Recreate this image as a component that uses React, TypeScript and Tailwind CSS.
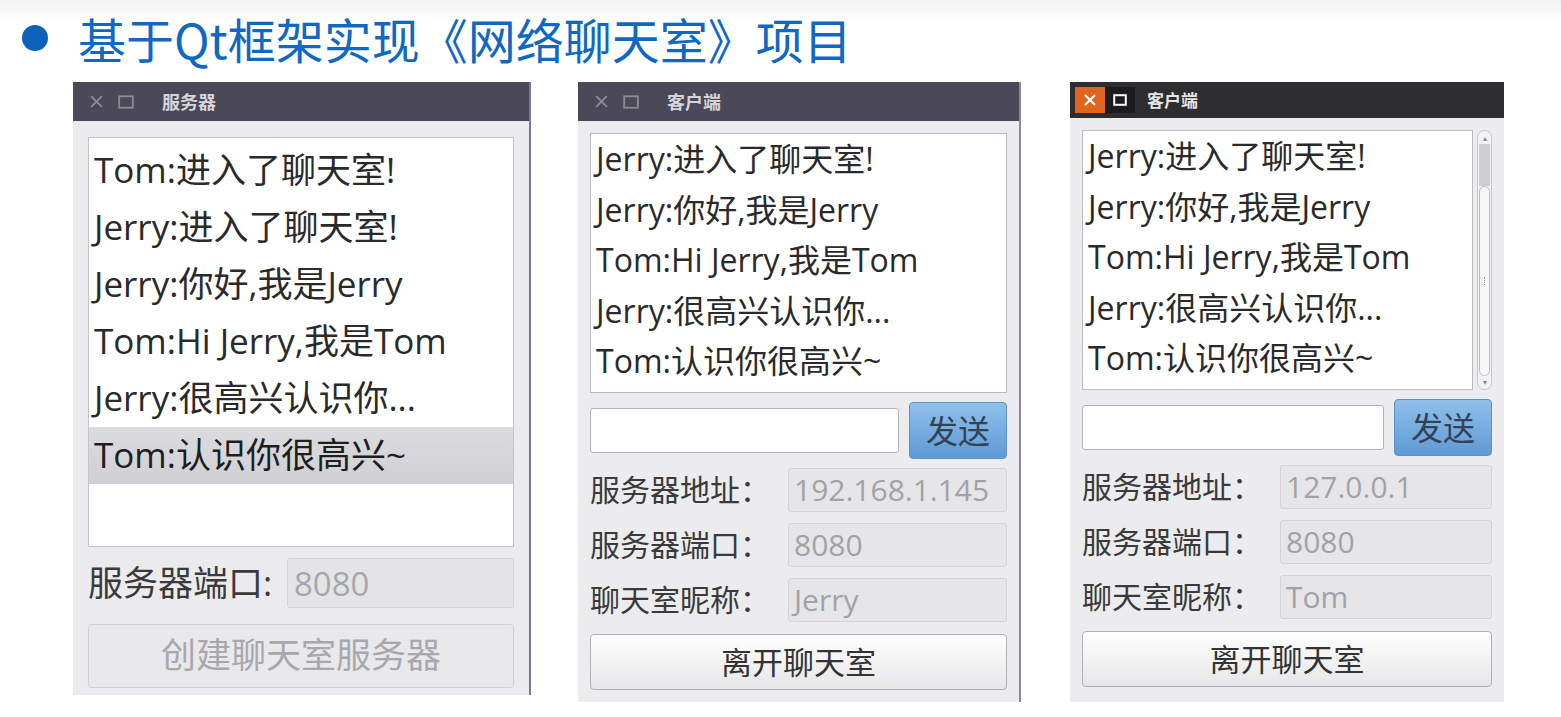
import React from 'react';

const cjk = '"Open Sans", "Noto Sans CJK SC", sans-serif';
const titleFont = '"Noto Sans CJK SC", sans-serif';

function TitleBar({ title, dark }: { title: string; dark?: boolean }) {
  if (dark) {
    return (
      <div className="flex h-[36px] items-center bg-[#2e2d30] pl-[5px]">
        <div className="flex h-[26px] w-[30px] items-center justify-center bg-[#e2631e]">
          <svg width="14" height="14" viewBox="0 0 14 14">
            <path d="M2 2 L12 12 M12 2 L2 12" stroke="#fff" strokeWidth="2.2" />
          </svg>
        </div>
        <div className="flex h-[26px] w-[30px] items-center justify-center bg-[#1c1c1e]">
          <svg width="14" height="12" viewBox="0 0 14 12">
            <rect x="1.2" y="1.2" width="11.6" height="9.6" fill="none" stroke="#fff" strokeWidth="2" />
          </svg>
        </div>
        <span className="ml-[12px] text-[17px] font-bold text-[#e4e4e6]" style={{ fontFamily: titleFont }}>
          {title}
        </span>
      </div>
    );
  }
  return (
    <div className="flex h-[39px] items-center gap-[14px] bg-[#4b4957] pl-[16px]">
      <svg width="15" height="15" viewBox="0 0 14 14">
        <path d="M2 2 L12 12 M12 2 L2 12" stroke="#8c8a96" strokeWidth="1.8" />
      </svg>
      <svg width="16" height="14" viewBox="0 0 14 12">
        <rect x="1" y="1" width="12" height="10" fill="none" stroke="#8c8a96" strokeWidth="1.6" />
      </svg>
      <span className="ml-[14px] text-[18px] font-bold text-[#d6d5dc]" style={{ fontFamily: titleFont }}>
        {title}
      </span>
    </div>
  );
}

function ReadOnlyField({ label, value }: { label: string; value: string }) {
  return (
    <div className="flex items-center">
      <span className="w-[198px] text-[30px] text-[#3a3a3a]" style={{ fontFamily: cjk }}>
        {label}
      </span>
      <div
        className="flex h-[44px] flex-1 items-center rounded-[3px] border border-[#d4d4d8] bg-[#e6e6e9] pl-[5px] text-[30px] text-[#a2a2a6]"
        style={{ fontFamily: cjk }}
      >
        {value}
      </div>
    </div>
  );
}

function Server() {
  const rows = ['Tom:进入了聊天室!', 'Jerry:进入了聊天室!', 'Jerry:你好,我是Jerry', 'Tom:Hi Jerry,我是Tom', 'Jerry:很高兴认识你...'];
  return (
    <div className="ml-[73px] flex h-[613px] w-[458px] flex-col border-r-2 border-[#7d72a8] bg-[#ebebee]">
      <TitleBar title="服务器" />
      <div className="flex flex-1 flex-col px-[15px] pt-[16px]">
        <div className="h-[410px] border border-[#c4c4c8] bg-white pt-[4px]" style={{ fontFamily: cjk }}>
          {rows.map((r) => (
            <div key={r} className="flex h-[57px] items-center pl-[5px] text-[35px] text-[#2a2a2a]">
              {r}
            </div>
          ))}
          <div className="flex h-[57px] items-center bg-gradient-to-b from-[#dcdce0] to-[#cfcfd4] pl-[5px] text-[35px] text-[#1e1e1e]">
            Tom:认识你很高兴~
          </div>
        </div>
        <div className="mt-[10px] flex items-center">
          <span className="w-[199px] text-[35px] text-[#3a3a3a]" style={{ fontFamily: cjk }}>
            服务器端口:
          </span>
          <div
            className="flex h-[50px] flex-1 items-center rounded-[3px] border border-[#d4d4d8] bg-[#e4e4e7] pl-[6px] text-[33px] text-[#a6a6aa]"
            style={{ fontFamily: cjk }}
          >
            8080
          </div>
        </div>
        <div
          className="mt-[14px] flex h-[64px] items-center justify-center rounded-[4px] border border-[#cfcfd3] bg-[#e9e9ec] text-[35px] text-[#a8a8ac]"
          style={{ fontFamily: cjk }}
        >
          创建聊天室服务器
        </div>
      </div>
    </div>
  );
}

function Client({
  rows,
  addr,
  nick,
  dark,
  scroll,
  className,
}: {
  rows: string[];
  addr: string;
  nick: string;
  dark?: boolean;
  scroll?: boolean;
  className: string;
}) {
  return (
    <div className={'flex h-[620px] flex-col bg-[#ececef] ' + className}>
      <TitleBar title="客户端" dark={dark} />
      <div className="flex flex-1 flex-col px-[12px] pt-[12px]">
        <div className="flex h-[260px]">
          <div className="flex-1 border border-[#b9b9be] bg-white" style={{ fontFamily: cjk }}>
            {rows.map((r) => (
              <div key={r} className="flex h-[50.5px] items-center pl-[5px] text-[32px] text-[#2a2a2a]">
                {r}
              </div>
            ))}
          </div>
          {scroll && (
            <div className="ml-[4px] flex w-[15px] flex-col rounded-[7px] border border-[#c6c6cb] bg-[#f2f2f4] p-[1px]">
              <div className="h-[12px] text-center text-[8px] leading-[12px] text-[#888]">▴</div>
              <div className="h-[42px] bg-[#cfcfd3]" />
              <div className="flex flex-1 items-center justify-center rounded-[6px] border border-[#bdbdc2] bg-[#f7f7f8]">
                <div className="h-[8px] w-[2px] border-l border-dotted border-[#999]" />
              </div>
              <div className="h-[12px] text-center text-[8px] leading-[12px] text-[#888]">▾</div>
            </div>
          )}
        </div>
        <div className="mt-[9px] flex items-center gap-[10px]">
          <div className="h-[45px] flex-1 rounded-[3px] border border-[#b4b4b8] bg-white" />
          <div
            className="flex h-[57px] w-[98px] items-center justify-center rounded-[4px] border border-[#5a92c8] bg-gradient-to-b from-[#8fc0ec] to-[#5f9ad4] text-[32px] text-[#334255]"
            style={{ fontFamily: cjk }}
          >
            发送
          </div>
        </div>
        <div className="mt-[8px] flex flex-col gap-[10px]">
          <ReadOnlyField label="服务器地址：" value={addr} />
          <ReadOnlyField label="服务器端口：" value="8080" />
          <ReadOnlyField label="聊天室昵称：" value={nick} />
        </div>
        <div
          className="mt-[12px] flex h-[56px] items-center justify-center rounded-[4px] border border-[#b0b0b4] bg-gradient-to-b from-[#ffffff] to-[#e6e6e8] text-[31px] text-[#333]"
          style={{ fontFamily: cjk }}
        >
          离开聊天室
        </div>
      </div>
    </div>
  );
}

export default function App() {
  const rows = ['Jerry:进入了聊天室!', 'Jerry:你好,我是Jerry', 'Tom:Hi Jerry,我是Tom', 'Jerry:很高兴认识你...', 'Tom:认识你很高兴~'];
  return (
    <div className="h-[717px] w-[1561px] bg-white">
      <div className="flex h-[82px] items-center bg-gradient-to-b from-[#f2f2f2] to-[#ffffff] to-[25%] pb-[6px]">
        <div className="ml-[22px] h-[26px] w-[26px] rounded-full bg-[#0b62b8]" />
        <h1 className="ml-[30px] text-[48px] leading-none text-[#1068c2]" style={{ fontFamily: titleFont }}>
          基于Qt框架实现《网络聊天室》项目
        </h1>
      </div>
      <div className="flex items-start">
        <Server />
        <Client rows={rows} addr="192.168.1.145" nick="Jerry" className="ml-[47px] w-[443px] border-r-2 border-[#8a86a8]" />
        <Client rows={rows} addr="127.0.0.1" nick="Tom" dark scroll className="ml-[49px] w-[434px]" />
      </div>
    </div>
  );
}
